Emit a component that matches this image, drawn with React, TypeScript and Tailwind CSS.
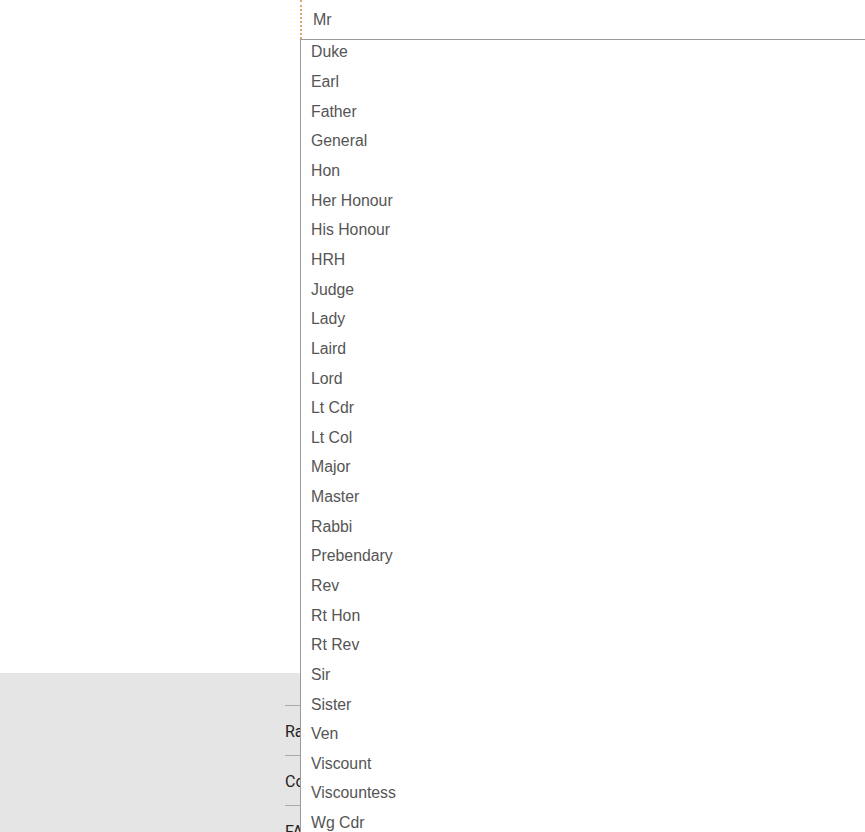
import React from 'react';

const titles = [
  'Duke',
  'Earl',
  'Father',
  'General',
  'Hon',
  'Her Honour',
  'His Honour',
  'HRH',
  'Judge',
  'Lady',
  'Laird',
  'Lord',
  'Lt Cdr',
  'Lt Col',
  'Major',
  'Master',
  'Rabbi',
  'Prebendary',
  'Rev',
  'Rt Hon',
  'Rt Rev',
  'Sir',
  'Sister',
  'Ven',
  'Viscount',
  'Viscountess',
  'Wg Cdr',
  'Wing Cdr',
];

export default function App() {
  return (
    <div
      className="relative h-[832px] w-full overflow-hidden bg-white"
      style={{ fontFamily: 'Tahoma, "Liberation Sans", Arial, sans-serif' }}
    >
      {/* Page body */}
      <div className="flex h-[673px] pl-[300px]">
        <div className="flex h-[39px] flex-1 items-center border-l-2 border-dotted border-l-[#e8a46a] pl-[11px] text-[16px] text-[#555]">
          Mr
        </div>
      </div>

      {/* Grey footer */}
      <div className="h-[159px] bg-[#e5e5e5] pl-[285px] pt-[32px] text-[16px] text-[#222]" style={{ fontFamily: 'Roboto, "Liberation Sans", sans-serif' }}>
        <ul className="w-[200px]">
          <li className="h-[50px] border-t border-[#aaa] pt-[14px]">Rates</li>
          <li className="h-[50px] border-t border-[#aaa] pt-[14px]">Contact</li>
          <li className="h-[50px] border-t border-[#aaa] pt-[14px]">FAQ</li>
        </ul>
      </div>

      {/* Open select list */}
      <div className="absolute left-[300px] top-[39px] h-[820px] w-[600px] overflow-hidden border-l border-t border-[#9a9a9a] bg-white">
        <ul className="-mt-[2.5px] text-[15.8px] text-[#555]">
          {titles.map((title) => (
            <li key={title} className="flex h-[29.65px] items-center pl-[10px]">
              {title}
            </li>
          ))}
        </ul>
      </div>
    </div>
  );
}
